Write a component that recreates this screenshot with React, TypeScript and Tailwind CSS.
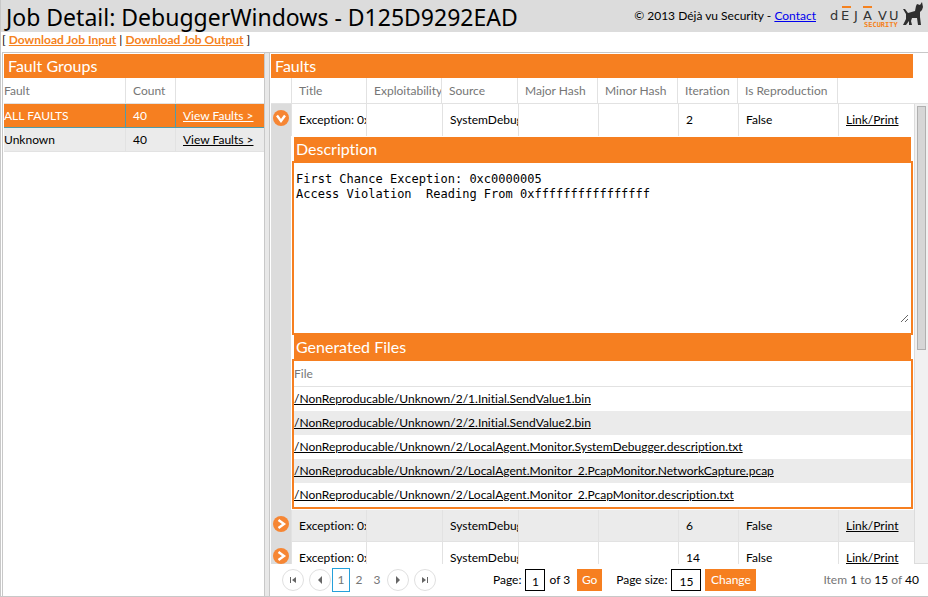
import React from "react";

const files = [
  "/NonReproducable/Unknown/2/1.Initial.SendValue1.bin",
  "/NonReproducable/Unknown/2/2.Initial.SendValue2.bin",
  "/NonReproducable/Unknown/2/LocalAgent.Monitor.SystemDebugger.description.txt",
  "/NonReproducable/Unknown/2/LocalAgent.Monitor_2.PcapMonitor.NetworkCapture.pcap",
  "/NonReproducable/Unknown/2/LocalAgent.Monitor_2.PcapMonitor.description.txt",
];

const description =
  "First Chance Exception: 0xc0000005\nAccess Violation  Reading From 0xffffffffffffffff";

function Logo() {
  return (
    <svg viewBox="0 0 100 32" className="h-8 w-[100px] shrink-0" role="img" aria-label="Deja vu Security">
      <g fill="#333" fontFamily="'DejaVu Sans', sans-serif" fontSize="13" fontWeight="400">
        <text x="2" y="20">d</text>
        <text x="13" y="20">E</text>
        <text x="26" y="20">J</text>
        <text x="35" y="20">A</text>
        <text x="50" y="20">V</text>
        <text x="61" y="20">U</text>
      </g>
      <g fill="#f58220">
        <rect x="14" y="6" width="9" height="2" />
        <rect x="35" y="6" width="9" height="2" />
        <text x="36" y="27" fontFamily="'DejaVu Sans Mono', monospace" fontSize="7" fontWeight="700">SECURITY</text>
      </g>
      <path
        fill="#2e2e2e"
        d="M75 9 L77 9 L80 13 L87 11 L88 6 L89 4 L92 5 L94 2 L95 7 L94 10 L92 12 L92 17 L93 25 L90 25 L89 18 L84 18 L83 21 L84 25 L81 25 L81 21 L78 25 L75 25 L78 19 L78 14 Z"
      />
    </svg>
  );
}

function ExpandButton({ open }: { open: boolean }) {
  return (
    <button type="button" aria-label={open ? "Collapse fault" : "Expand fault"} className="mx-auto block size-4">
      <svg viewBox="0 0 16 16" className="size-4">
        <circle cx="8" cy="8" r="8" fill="#f68634" />
        <path d={open ? "M4 5.5 L8 11 L12 5.5" : "M5.5 4 L11 8 L5.5 12"} fill="none" stroke="#fff" strokeWidth="2.4" />
      </svg>
    </button>
  );
}

const cell = "overflow-hidden border-r border-[#e2e2e2] pl-[7px] whitespace-nowrap";

function FaultRow({ open = false, alt = false, iteration }: { open?: boolean; alt?: boolean; iteration: number }) {
  return (
    <tr className={`h-8 ${alt ? "bg-[#ebebeb]" : "bg-white"}`}>
      <td className="border-r border-[#e2e2e2] bg-[#dcdcdc] pb-1">
        <ExpandButton open={open} />
      </td>
      {["Exception: 0xc0000005", "", "SystemDebugger", "", "", String(iteration), "False"].map((v, i) => (
        <td key={i} className={`${cell} ${open ? "" : "border-b"}`}>
          {v}
        </td>
      ))}
      <td className={`pl-[7px] ${open ? "" : "border-b border-[#e2e2e2]"}`}>
        <a href="#print" className="underline">
          Link/Print
        </a>
      </td>
    </tr>
  );
}

function PageButton({ label, d }: { label: string; d: string }) {
  return (
    <button
      type="button"
      aria-label={label}
      className="flex size-[22px] items-center justify-center rounded-full border border-[#e0e0e0]"
    >
      <svg viewBox="0 0 8 8" className="size-2">
        <path d={d} fill="#666" />
      </svg>
    </button>
  );
}

export default function App() {
  return (
    <div className="flex h-screen flex-col overflow-hidden border-b border-l border-[#c8c8c8] bg-white font-['Lato','Open_Sans',sans-serif] text-[12px] leading-4 text-black [font-variant-ligatures:none]">
      <header className="flex h-8 shrink-0 items-center bg-[#dcdcdc] pl-[5px]">
        <h1 className="flex-1 pt-[2px] font-['Noto_Sans','Open_Sans',sans-serif] text-[23px] leading-7 whitespace-nowrap">
          Job Detail: DebuggerWindows - D125D9292EAD
        </h1>
        <span className="mr-3 whitespace-nowrap">
          © 2013 Déjà vu Security -{" "}
          <a href="#contact" className="text-[#0000ee] underline">
            Contact
          </a>
        </span>
        <Logo />
      </header>
      <nav className="h-5 shrink-0 pl-px whitespace-nowrap">
        [{" "}
        <a href="#input" className="font-bold text-[#f58220] underline">
          Download Job Input
        </a>{" "}
        |{" "}
        <a href="#output" className="font-bold text-[#f58220] underline">
          Download Job Output
        </a>{" "}
        ]
      </nav>

      <div className="ml-px flex min-h-0 flex-1 border-t border-l border-[#c8c8c8]">
        <section className="w-[261px] shrink-0 pt-px pl-px">
          <h2 className="h-6 bg-[#f67f20] pl-1 text-[16px] leading-6 text-white">Fault Groups</h2>
          <table className="w-full table-fixed border-separate border-spacing-0">
            <colgroup>
              <col className="w-[122px]" />
              <col className="w-[50px]" />
              <col />
            </colgroup>
            <thead>
              <tr className="h-[26px] text-left text-[#767676]">
                <th className="border-r border-b border-[#e2e2e2] font-normal">Fault</th>
                <th className="border-r border-b border-[#e2e2e2] pl-[7px] font-normal">Count</th>
                <th className="border-b border-[#e2e2e2]" aria-label="Actions" />
              </tr>
            </thead>
            <tbody>
              <tr className="h-6 bg-[#f67f20] text-white">
                <td className="border-r border-b border-[#4f9cab]">ALL FAULTS</td>
                <td className="border-r border-b border-[#4f9cab] pl-[7px]">40</td>
                <td className="border-b border-[#4f9cab] pl-[7px]">
                  <a href="#all" className="underline">View Faults &gt;</a>
                </td>
              </tr>
              <tr className="h-6 bg-[#ebebeb]">
                <td className="border-r border-b border-[#e2e2e2]">Unknown</td>
                <td className="border-r border-b border-[#e2e2e2] pl-[7px]">40</td>
                <td className="border-b border-[#e2e2e2] pl-[7px]">
                  <a href="#unknown" className="underline">View Faults &gt;</a>
                </td>
              </tr>
            </tbody>
          </table>
        </section>

        <div className="w-[6px] shrink-0 border-x border-[#c8c8c8] bg-[#e8e8e8]" />

        <section className="flex min-w-0 flex-1 flex-col pt-px pl-px">
          <h2 className="mr-[15px] h-6 shrink-0 bg-[#f67f20] pl-1 text-[16px] leading-6 text-white">Faults</h2>
          <div className="shrink-0 border-b border-[#e2e2e2] pr-[14px]">
            <table className="w-full table-fixed border-separate border-spacing-0">
              <colgroup>
                <col className="w-[21px]" />
                <col className="w-[75px]" />
                <col className="w-[75px]" />
                <col className="w-[76px]" />
                <col className="w-[80px]" />
                <col className="w-[80px]" />
                <col className="w-[60px]" />
                <col className="w-[100px]" />
                <col />
              </colgroup>
              <thead>
                <tr className="h-[25px] text-left text-[#767676]">
                  {["", "Title", "Exploitability", "Source", "Major Hash", "Minor Hash", "Iteration", "Is Reproduction"].map(
                    (h, i) => (
                      <th key={i} className={`${cell} font-normal`}>
                        {h}
                      </th>
                    ),
                  )}
                  <th aria-label="Link" />
                </tr>
              </thead>
            </table>
          </div>

          <div className="flex min-h-0 flex-1">
            <div className="min-w-0 flex-1 overflow-hidden">
              <table className="w-full table-fixed border-separate border-spacing-0">
                <colgroup>
                  <col className="w-[21px]" />
                  <col className="w-[75px]" />
                  <col className="w-[76px]" />
                  <col className="w-[76px]" />
                  <col className="w-[80px]" />
                  <col className="w-[80px]" />
                  <col className="w-[60px]" />
                  <col className="w-[100px]" />
                  <col />
                </colgroup>
                <tbody>
                  <FaultRow open iteration={2} />
                  <tr>
                    <td className="border-r border-white bg-[#dcdcdc]" />
                    <td colSpan={8} className="bg-white py-px pr-px">
                      <h3 className="mx-[2px] h-6 bg-[#f67f20] pl-[2px] text-[16px] leading-6 text-white">
                        <label htmlFor="description">Description</label>
                      </h3>
                      <div className="h-[174px] border-2 border-[#f67f20] pt-[9px] pr-[2px] pb-[10px]">
                        <textarea
                          id="description"
                          className="block h-full w-full resize pl-[2px] font-['DejaVu_Sans_Mono','Liberation_Mono',monospace] text-[12px] leading-[15px] whitespace-pre outline-none"
                          defaultValue={description}
                        />
                      </div>
                      <h3 className="mx-[2px] h-6 bg-[#f67f20] pl-[2px] text-[16px] leading-6 text-white">
                        Generated Files
                      </h3>
                      <div className="border-2 border-[#f67f20]">
                        <table className="w-full border-separate border-spacing-0">
                          <thead>
                            <tr className="h-[26px] text-left text-[#767676]">
                              <th className="border-b border-[#e2e2e2] font-normal">File</th>
                            </tr>
                          </thead>
                          <tbody>
                            {files.map((f, i) => (
                              <tr key={f} className={`h-6 ${i % 2 ? "bg-[#ebebeb]" : "bg-white"}`}>
                                <td className="whitespace-nowrap">
                                  <a href="#file" className="underline">
                                    {f}
                                  </a>
                                </td>
                              </tr>
                            ))}
                          </tbody>
                        </table>
                      </div>
                    </td>
                  </tr>
                  <FaultRow alt iteration={6} />
                  <FaultRow iteration={14} />
                </tbody>
              </table>
            </div>
            <div className="w-[14px] shrink-0 border-b border-l border-[#dcdcdc] bg-[#f1f1f1] px-[2px] pt-[2px]">
              <div className="h-[244px] border border-[#b0b0b0] bg-[#d6d6d6]" />
            </div>
          </div>

          <footer className="flex h-8 shrink-0 items-center pr-[9px] pl-[11px]">
            <div className="flex items-center gap-[5px] text-[#767676]">
              <PageButton label="First page" d="M1 1h1v6H1zM7 1v6L3 4z" />
              <PageButton label="Previous page" d="M6 0v8L2 4z" />
              <div className="-mx-1 flex">
                <button type="button" className="h-6 w-[18px] border border-[#25a0da]">1</button>
                <button type="button" className="h-6 w-[18px]">2</button>
                <button type="button" className="h-6 w-[18px]">3</button>
              </div>
              <PageButton label="Next page" d="M2 0v8L6 4z" />
              <PageButton label="Last page" d="M1 1v6L5 4zM6 1h1v6H6z" />
            </div>
            <div className="ml-[57px] flex items-center whitespace-nowrap">
              <label htmlFor="page">Page:</label>
              <input id="page" defaultValue="1" className="mx-1 h-[22px] w-5 border border-black pt-[2px] text-center" />
              <span>of 3</span>
              <button type="button" className="ml-[7px] h-[22px] w-[25px] bg-[#f67f20] text-white">Go</button>
              <label htmlFor="size" className="ml-[14px]">Page size:</label>
              <input id="size" defaultValue="15" className="mx-1 h-[22px] w-[30px] border border-black pt-[2px] text-center" />
              <button type="button" className="h-[22px] w-[51px] bg-[#f67f20] text-white">Change</button>
            </div>
            <p className="ml-auto whitespace-nowrap text-[#767676]">
              Item <span className="text-black">1</span> to <span className="text-black">15</span> of{" "}
              <span className="text-black">40</span>
            </p>
          </footer>
        </section>
      </div>
    </div>
  );
}
